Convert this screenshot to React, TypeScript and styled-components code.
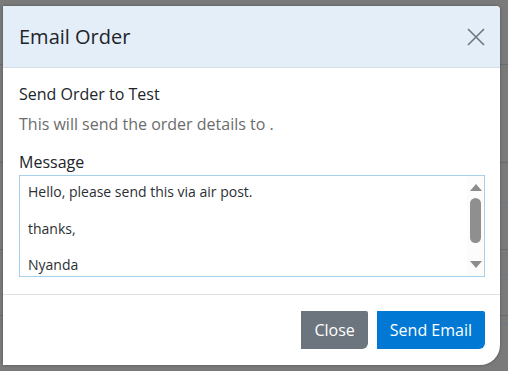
import React from "react";
import styled, { createGlobalStyle } from "styled-components";

const Global = createGlobalStyle`
  html, body { margin: 0; padding: 0; }
  body {
    background: #7a7a7a;
    font-family: "Open Sans", "Noto Sans", sans-serif;
    width: 508px;
    height: 371px;
    overflow: hidden;
  }
`;

const Page = styled.div`
  position: relative;
  width: 508px;
  height: 371px;
  overflow: hidden;
`;

const BgTable = styled.div`
  display: flex;
  flex-direction: column;
`;

const BgRow = styled.div<{ $h: number; $blue?: boolean }>`
  height: ${(p) => p.$h}px;
  border-bottom: 1px solid ${(p) => (p.$blue ? "#6a7886" : "#6c6c6c")};
  box-sizing: border-box;
`;

const Dialog = styled.div`
  position: absolute;
  left: 3px;
  top: 6px;
  width: 497px;
  height: 359px;
  background: #ffffff;
  border-radius: 0 4px 20px 0;
  box-shadow: 0 0 3px rgba(0, 0, 0, 0.35);
  display: flex;
  flex-direction: column;
  overflow: hidden;
`;

const Header = styled.div`
  height: 62px;
  box-sizing: border-box;
  background: #e4eef8;
  border-bottom: 1px solid #d9dfe6;
  display: flex;
  align-items: center;
  justify-content: space-between;
  padding: 0 14px 0 16px;
`;

const Title = styled.h5`
  margin: 0;
  font-size: 20px;
  font-weight: 400;
  color: #212529;
  line-height: 24px;
`;

const CloseX = styled.button`
  border: 0;
  background: transparent;
  padding: 0;
  width: 20px;
  height: 20px;
  display: flex;
  align-items: center;
  justify-content: center;
  cursor: pointer;
`;

const Body = styled.div`
  padding: 14px 16px 17px;
  display: flex;
  flex-direction: column;
  border-bottom: 1px solid #dee2e6;
`;

const Heading = styled.div`
  font-size: 16px;
  line-height: 24px;
  color: #212529;
`;

const Desc = styled.div`
  font-size: 16px;
  line-height: 24px;
  color: #6c6c6c;
  margin-top: 6px;
`;

const Label = styled.label`
  font-size: 16px;
  line-height: 24px;
  color: #212529;
  margin-top: 14px;
  margin-bottom: 1px;
`;

const Field = styled.div`
  box-sizing: border-box;
  width: 466px;
  height: 102px;
  border: 1px solid #a9d0ea;
  display: flex;
  background: #fff;
`;

const Message = styled.textarea`
  flex: 1;
  box-sizing: border-box;
  height: 100%;
  border: 0;
  padding: 7px 8px;
  font-family: "Open Sans", "Noto Sans", sans-serif;
  font-size: 14px;
  line-height: 18.3px;
  color: #2b2f33;
  resize: none;
  overflow: hidden;
  outline: none;
  background: transparent;
`;

const ScrollBar = styled.div`
  width: 17px;
  background: #fcfcfc;
  display: flex;
  flex-direction: column;
  align-items: center;
  padding: 8px 0 8px;
  box-sizing: border-box;
`;

const Arrow = styled.div<{ $dir: "up" | "down" }>`
  width: 0;
  height: 0;
  border-left: 6px solid transparent;
  border-right: 6px solid transparent;
  ${(p) =>
    p.$dir === "up"
      ? "border-bottom: 7px solid #8c8c8c;"
      : "border-top: 7px solid #8c8c8c;"}
`;

const Thumb = styled.div`
  width: 11px;
  height: 45px;
  border-radius: 6px;
  background: #8f8f8f;
  margin-top: 7px;
`;

const Spacer = styled.div`
  flex: 1;
`;

const Footer = styled.div`
  flex: 1;
  display: flex;
  justify-content: flex-end;
  align-items: flex-start;
  gap: 9px;
  padding: 16px 15px 0 0;
`;

const Btn = styled.button<{ $variant: "secondary" | "primary" }>`
  height: 38px;
  border: 0;
  border-radius: 0 2px 6px 0;
  padding: 0 13px;
  font-family: "Open Sans", "Noto Sans", sans-serif;
  font-size: 16px;
  color: #ffffff;
  background: ${(p) => (p.$variant === "primary" ? "#0078d4" : "#6c757d")};
  cursor: pointer;
`;

const rows: { h: number; blue?: boolean }[] = [
  { h: 65 },
  { h: 98 },
  { h: 40, blue: true },
  { h: 47 },
  { h: 25, blue: true },
  { h: 41 },
  { h: 9, blue: true },
  { h: 47 },
];

export default function App() {
  return (
    <Page>
      <Global />
      <BgTable>
        {rows.map((r, i) => (
          <BgRow key={i} $h={r.h} $blue={r.blue} />
        ))}
      </BgTable>
      <Dialog>
        <Header>
          <Title>Email Order</Title>
          <CloseX aria-label="Close">
            <svg width="18" height="18" viewBox="0 0 18 18">
              <path
                d="M1 1 L17 17 M17 1 L1 17"
                stroke="#6c757d"
                strokeWidth="1.6"
                fill="none"
              />
            </svg>
          </CloseX>
        </Header>
        <Body>
          <Heading>Send Order to Test</Heading>
          <Desc>This will send the order details to .</Desc>
          <Label>Message</Label>
          <Field>
            <Message
              defaultValue={"Hello, please send this via air post.\n\nthanks,\n\nNyanda\n\n"}
            />
            <ScrollBar>
              <Arrow $dir="up" />
              <Thumb />
              <Spacer />
              <Arrow $dir="down" />
            </ScrollBar>
          </Field>
        </Body>
        <Footer>
          <Btn $variant="secondary">Close</Btn>
          <Btn $variant="primary">Send Email</Btn>
        </Footer>
      </Dialog>
    </Page>
  );
}
